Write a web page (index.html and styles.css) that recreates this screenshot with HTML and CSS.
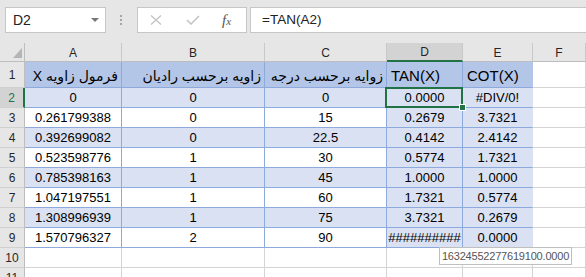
FILE: index.html
```html
<!DOCTYPE html>
<html lang="fa">

<head>
    <meta charset="UTF-8">
    <title>TAN / COT</title>
    <link rel="stylesheet" href="styles.css">
</head>

<body>
    <div class="bar">
        <div class="namebox"><span>D2</span><span class="caret"></span></div>
        <div class="dots"><i></i><i></i><i></i></div>
        <div class="fxbox">
            <svg class="ico" width="12" height="10" viewBox="0 0 12 10">
                <path d="M1 0.5L11 9.5M11 0.5L1 9.5" stroke="#c4c4c4" stroke-width="1.3" fill="none" />
            </svg>
            <svg class="ico ok" width="14" height="10" viewBox="0 0 14 10">
                <path d="M1 5L5 9L13 1" stroke="#c4c4c4" stroke-width="1.6" fill="none" />
            </svg>
            <span class="fx">f<span>x</span></span>
        </div>
        <div class="formula">=TAN(A2)</div>
    </div>

    <div class="sheet">
        <!-- column headers -->
        <div class="corner"><span class="tri"></span></div>
        <div class="ch">A</div>
        <div class="ch">B</div>
        <div class="ch">C</div>
        <div class="ch on">D</div>
        <div class="ch">E</div>
        <div class="ch">F</div>

        <!-- row 1 -->
        <div class="rh">1</div>
        <div class="t hd rtl">فرمول زاویه X</div>
        <div class="t hd rtl">زاویه برحسب رادیان</div>
        <div class="t hd rtl">زوایه برحسب درجه</div>
        <div class="t hd">TAN(X)</div>
        <div class="t hd e">COT(X)</div>
        <div class="g"></div>

        <!-- row 2 -->
        <div class="rh on">2</div>
        <div class="t b">0</div>
        <div class="t b">0</div>
        <div class="t b">0</div>
        <div class="t b sel">0.0000</div>
        <div class="t b e">#DIV/0!</div>
        <div class="g"></div>

        <!-- row 3 -->
        <div class="rh">3</div>
        <div class="t">0.261799388</div>
        <div class="t">0</div>
        <div class="t">15</div>
        <div class="t b">0.2679</div>
        <div class="t b e">3.7321</div>
        <div class="g"></div>

        <!-- row 4 -->
        <div class="rh">4</div>
        <div class="t b">0.392699082</div>
        <div class="t b">0</div>
        <div class="t b">22.5</div>
        <div class="t b">0.4142</div>
        <div class="t b e">2.4142</div>
        <div class="g"></div>

        <!-- row 5 -->
        <div class="rh">5</div>
        <div class="t">0.523598776</div>
        <div class="t">1</div>
        <div class="t">30</div>
        <div class="t b">0.5774</div>
        <div class="t b e">1.7321</div>
        <div class="g"></div>

        <!-- row 6 -->
        <div class="rh">6</div>
        <div class="t b">0.785398163</div>
        <div class="t b">1</div>
        <div class="t b">45</div>
        <div class="t b">1.0000</div>
        <div class="t b e">1.0000</div>
        <div class="g"></div>

        <!-- row 7 -->
        <div class="rh">7</div>
        <div class="t">1.047197551</div>
        <div class="t">1</div>
        <div class="t">60</div>
        <div class="t b">1.7321</div>
        <div class="t b e">0.5774</div>
        <div class="g"></div>

        <!-- row 8 -->
        <div class="rh">8</div>
        <div class="t b">1.308996939</div>
        <div class="t b">1</div>
        <div class="t b">75</div>
        <div class="t b">3.7321</div>
        <div class="t b e">0.2679</div>
        <div class="g"></div>

        <!-- row 9 -->
        <div class="rh">9</div>
        <div class="t">1.570796327</div>
        <div class="t">2</div>
        <div class="t">90</div>
        <div class="t b">##########</div>
        <div class="t b e">0.0000</div>
        <div class="g"></div>

        <!-- row 10 -->
        <div class="rh">10</div>
        <div class="g"></div>
        <div class="g"></div>
        <div class="g"></div>
        <div class="g"></div>
        <div class="g"></div>
        <div class="g"></div>

        <!-- row 11 -->
        <div class="rh">11</div>
        <div class="g"></div>
        <div class="g"></div>
        <div class="g"></div>
        <div class="g"></div>
        <div class="g"></div>
        <div class="g"></div>

        <div class="tip">16324552277619100.0000</div>
    </div>
</body>

</html>
```

FILE: styles.css
```css
body {
    margin: 0;
    width: 586px;
    height: 277px;
    overflow: hidden;
    background: #fff;
    font-family: "Liberation Sans", "DejaVu Sans", sans-serif;
    color: #000;
}

/* formula bar */
.bar {
    height: 43px;
    box-sizing: border-box;
    padding: 7px 0 0 5px;
    background: #e6e6e6;
    display: flex;
    align-items: flex-start;
}

.namebox {
    width: 101px;
    height: 26px;
    box-sizing: border-box;
    border: 1px solid #c6c6c6;
    background: #fff;
    display: flex;
    align-items: center;
    justify-content: space-between;
    padding: 0 6px 0 7px;
    font-size: 14px;
    color: #222;
}

.caret {
    width: 0;
    height: 0;
    border-left: 4px solid transparent;
    border-right: 4px solid transparent;
    border-top: 4px solid #777;
}

.dots {
    margin: 8px 0 0 14px;
    display: flex;
    flex-direction: column;
    gap: 2px;
}

.dots i {
    width: 2px;
    height: 2px;
    background: #a6a6a6;
}

.fxbox {
    margin-left: 15px;
    width: 110px;
    height: 26px;
    box-sizing: border-box;
    border: 1px solid #c6c6c6;
    background: #fff;
    display: flex;
    align-items: center;
    padding-left: 12px;
}

.ico.ok {
    margin-left: 24px;
}

.fx {
    margin-left: 22px;
    font-family: "Liberation Serif", serif;
    font-style: italic;
    font-size: 15px;
    color: #555;
}

.fx span {
    font-size: 11px;
}

.formula {
    margin-left: 3px;
    flex: 1;
    height: 26px;
    box-sizing: border-box;
    border: 1px solid #c6c6c6;
    border-right: 0;
    background: #fff;
    padding-left: 11px;
    line-height: 24px;
    font-size: 13.5px;
    color: #222;
}

/* grid */
.sheet {
    position: relative;
    display: grid;
    grid-template-columns: 25px 97px 143px 122px 76px 70px 1fr;
    grid-template-rows: 19px 26px repeat(10, 20px);
    font-size: 13px;
}

.sheet>div {
    box-sizing: border-box;
    border-right: 1px solid #d4d4d4;
    border-bottom: 1px solid #d4d4d4;
    display: flex;
    align-items: center;
    justify-content: center;
    overflow: hidden;
    white-space: nowrap;
}

.corner {
    background: #e6e6e6;
    position: relative;
    border-color: #bdbdbd !important;
}

.tri {
    position: absolute;
    right: 2px;
    bottom: 3px;
    width: 0;
    height: 0;
    border-left: 9px solid transparent;
    border-bottom: 10px solid #b5b5b5;
}

.sheet>.ch {
    background: #e6e6e6;
    border-right-color: #c8c8c8;
    border-bottom-color: #bdbdbd;
    font-size: 12px;
    color: #262626;
    padding-top: 1px;
}

.sheet>.ch.on {
    background: #d3d3d3;
    border-bottom: 2px solid #217346;
}

.sheet>.rh {
    background: #e6e6e6;
    border-right-color: #bdbdbd;
    border-bottom-color: #d0d0d0;
    font-size: 12px;
    color: #262626;
}

.sheet>.rh.on {
    background: #d3d3d3;
    border-right: 2px solid #217346;
    color: #217346;
}

.sheet>.t {
    border-color: #8ea9db;
}

.sheet>.b {
    background: #d9e1f2;
}

.sheet>.hd {
    background: #b4c6e7;
    font-size: 15px;
    align-items: flex-end;
    justify-content: flex-start;
    padding: 0 0 3px 4px;
}

.sheet>.hd.rtl {
    direction: rtl;
    padding: 0 3px 3px 0;
    font-size: 14px;
}

.sheet>.e {
    border-right-color: transparent;
}

.sheet>.sel {
    position: relative;
    overflow: visible;
}

.sel::after {
    content: "";
    position: absolute;
    left: -2px;
    top: -1px;
    right: -1px;
    bottom: -1px;
    border: 2px solid #217346;
    z-index: 2;
}

.sel::before {
    content: "";
    position: absolute;
    right: -4px;
    bottom: -4px;
    width: 5px;
    height: 5px;
    background: #217346;
    border: 1px solid #fff;
    z-index: 3;
}

.sheet>.tip {
    position: absolute;
    left: 439px;
    top: 204px;
    width: 133px;
    height: 18px;
    border: 1px solid #bfbfbf;
    background: #fff;
    color: #555;
    font-size: 11px;
    letter-spacing: -0.2px;
    z-index: 4;
}
```
